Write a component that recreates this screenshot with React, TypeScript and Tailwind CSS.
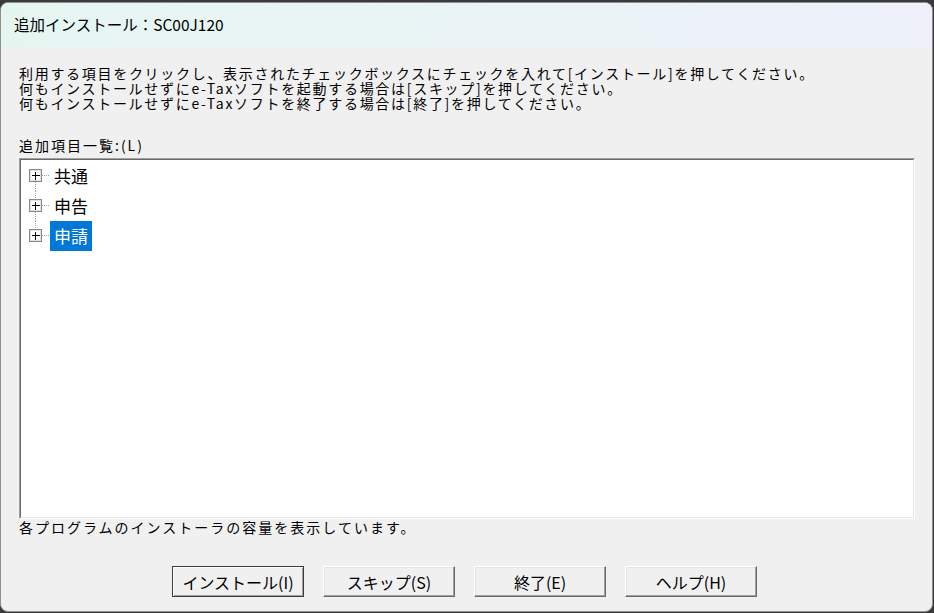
import React from "react";

type TreeItem = {
  label: string;
  selected?: boolean;
};

const items: TreeItem[] = [{ label: "共通" }, { label: "申告" }, { label: "申請", selected: true }];

const buttons = ["インストール(I)", "スキップ(S)", "終了(E)", "ヘルプ(H)"];

const font = "font-['Noto_Sans_CJK_JP','Noto_Sans',sans-serif]";

// the +-box with its dotted connector lines
const Expander: React.FC<{ first: boolean; last: boolean }> = ({ first, last }) => (
  <svg width="29" height="30" viewBox="0 0 29 30" shapeRendering="crispEdges">
    {!first && <line x1="14.5" y1="0" x2="14.5" y2="8" stroke="#a0a0a0" strokeDasharray="1 1" />}
    {!last && <line x1="14.5" y1="21" x2="14.5" y2="30" stroke="#a0a0a0" strokeDasharray="1 1" />}
    <line x1="21" y1="14.5" x2="29" y2="14.5" stroke="#a0a0a0" strokeDasharray="1 1" />
    <rect x="8.5" y="8.5" width="12" height="12" fill="#fff" stroke="#8a8a8a" />
    <rect x="9.5" y="9.5" width="10" height="10" fill="none" stroke="#e0e0e0" />
    <line x1="11" y1="14.5" x2="19" y2="14.5" stroke="#000" />
    <line x1="14.5" y1="11" x2="14.5" y2="19" stroke="#000" />
  </svg>
);

const App: React.FC = () => {
  return (
    <div className={`w-[934px] h-[613px] bg-[#3a3a3a] pt-[2px] ${font}`}>
      <div className="w-[933px] h-[610px] rounded-lg border border-[#8f8f8f] bg-[#f0f0f0] flex flex-col overflow-hidden text-black">
        <div className="h-[44px] shrink-0 flex items-center pl-[13px] bg-gradient-to-r from-[#e5f6f1] to-[#eef1fa] text-[15.5px]">
          追加インストール：SC00J120
        </div>
        <div className="flex flex-col px-[18px] pt-[19px]">
          <div className="text-[14px] leading-[15px] tracking-[1.7px]">
            <p>利用する項目をクリックし、表示されたチェックボックスにチェックを入れて[インストール]を押してください。</p>
            <p>何もインストールせずにe-Taxソフトを起動する場合は[スキップ]を押してください。</p>
            <p>何もインストールせずにe-Taxソフトを終了する場合は[終了]を押してください。</p>
          </div>
          <p className="mt-[27px] text-[14px] leading-[15px] tracking-[2px]">追加項目一覧:(L)</p>
          <div className="mt-[5px] h-[361px] w-[896px] border border-t-[#a0a0a0] border-l-[#a0a0a0] border-r-white border-b-white">
            <div className="h-full bg-white border border-t-[#696969] border-l-[#696969] border-r-[#e3e3e3] border-b-[#e3e3e3] pt-[1px]">
              {items.map((item, i) => (
                <div key={item.label} className="flex h-[30px]">
                  <Expander first={i === 0} last={i === items.length - 1} />
                  <span
                    className={`h-[30px] px-[4px] flex items-center text-[17px] ${
                      item.selected ? "bg-[#0078d7] text-white" : ""
                    }`}
                  >
                    {item.label}
                  </span>
                </div>
              ))}
            </div>
          </div>
          <p className="mt-[1px] text-[14px] leading-[15px] tracking-[2px]">各プログラムのインストーラの容量を表示しています。</p>
          <div className="mt-[31px] ml-[153px] flex gap-[19px]">
            {buttons.map((label, i) => (
              <button
                key={label}
                className={`w-[132px] h-[31px] text-[16px] flex items-center justify-center bg-[#f0f0f0] border ${
                  i === 0
                    ? "border-[#3c3c3c] shadow-[inset_1px_1px_0_#fff,inset_-1px_-1px_0_#a0a0a0]"
                    : "border-t-white border-l-white border-r-[#696969] border-b-[#696969] shadow-[inset_-1px_-1px_0_#a0a0a0,inset_1px_1px_0_#e3e3e3]"
                }`}
              >
                {label}
              </button>
            ))}
          </div>
        </div>
      </div>
    </div>
  );
};

export default App;
